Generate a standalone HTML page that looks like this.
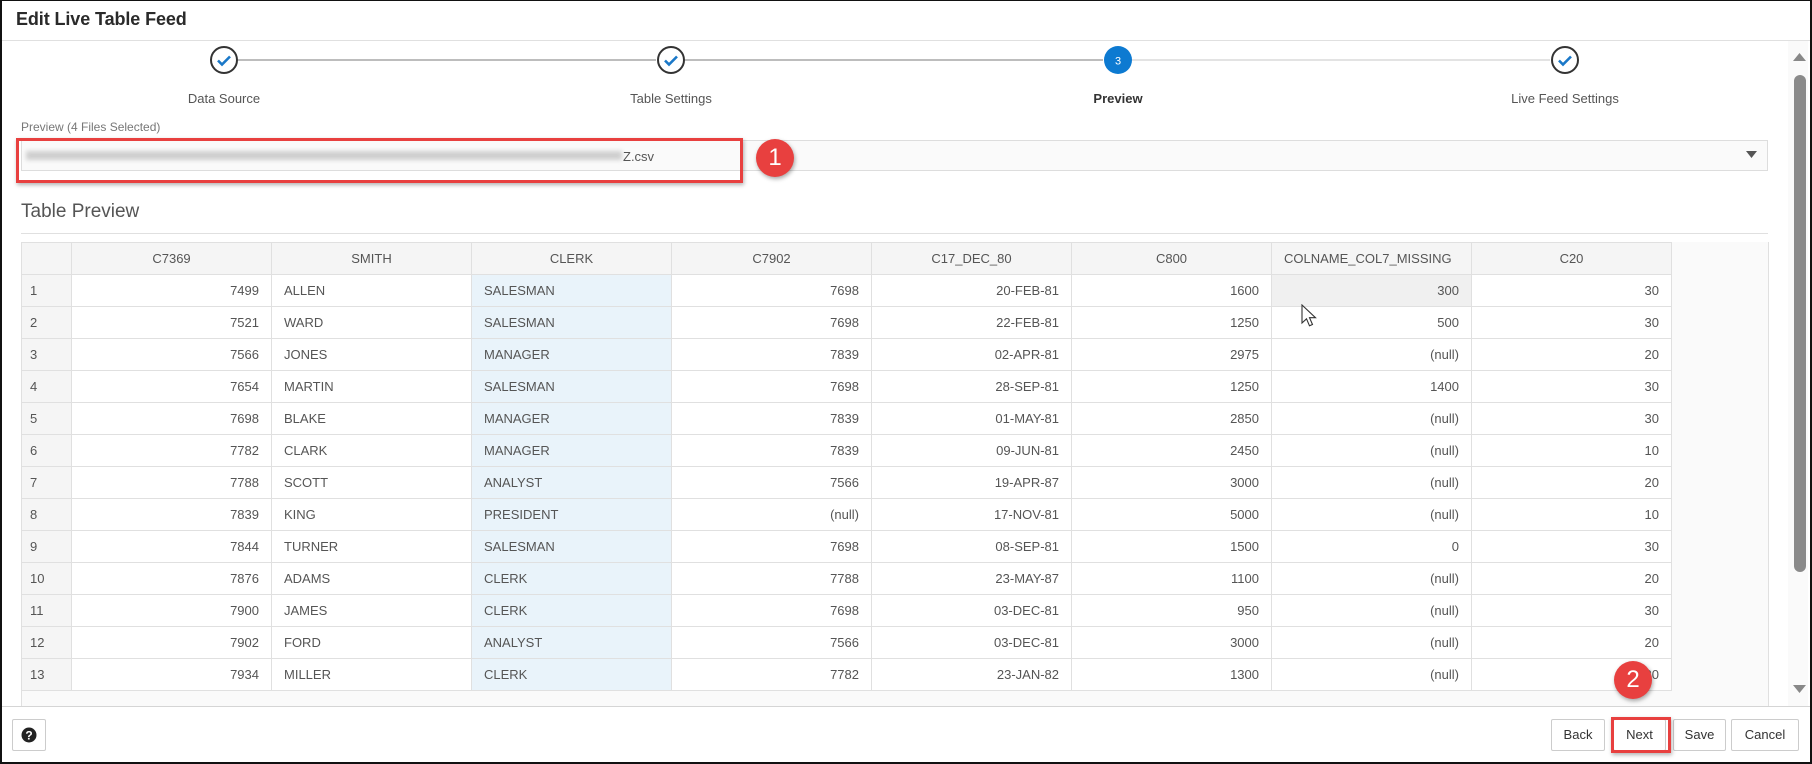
<!DOCTYPE html>
<html><head><meta charset="utf-8">
<style>
*{box-sizing:border-box;margin:0;padding:0}
body{width:1812px;height:764px;overflow:hidden;background:#fff;font-family:"Liberation Sans",sans-serif;color:#333;position:relative}
.frame{position:absolute;left:0;top:0;width:1812px;height:764px;border:2px solid #111;border-top:1px solid #111}
.abs{position:absolute}
.title{left:16px;top:9px;font-size:18px;font-weight:bold;color:#2a2a2a;letter-spacing:-0.1px}
.hline{height:1px;background:#e0e0e0}
.lbl{font-size:13px;color:#555;width:200px;text-align:center;top:91px}
table{border-collapse:collapse;position:absolute;left:21px;top:242px;font-size:13px;color:#555}
td,th{border:1px solid #e0e0e0;height:32px;padding:0 12px;font-weight:normal;white-space:nowrap}
th{background:#f5f5f5;text-align:center;width:200px}
th.rn{width:50px}
td{text-align:right;width:200px;background:#fff}
td.rn{background:#f5f5f5;text-align:left;padding-left:8px;width:50px}
td.l{text-align:left}
td.b{background:#e9f3fa}
td.g{background:#f0f0f0}
.btn{position:absolute;top:719px;height:32px;border:1px solid #ccc;border-radius:2px;background:#fff;font-size:13px;color:#333;text-align:center;line-height:30px}
.badge{position:absolute;width:38px;height:38px;border-radius:50%;background:#e8403f;color:#fff;font-size:24px;text-align:center;line-height:38px;box-shadow:1px 2px 4px rgba(0,0,0,.35)}
</style></head><body>
<div class="frame"></div>
<div class="abs title">Edit Live Table Feed</div>
<div class="abs hline" style="left:2px;top:40px;width:1808px"></div>

<div class="abs" style="left:238px;top:59px;width:418px;height:2px;background:#bdbdbd"></div>
<div class="abs" style="left:685px;top:59px;width:418px;height:2px;background:#bdbdbd"></div>
<div class="abs" style="left:1132px;top:59px;width:418px;height:2px;background:#e3e3e3"></div>
<svg class="abs" style="left:209px;top:45px" width="30" height="30"><circle cx="15" cy="15" r="13" fill="#fff" stroke="#333" stroke-width="2"/><path d="M9 15.5l4 4 8-8" fill="none" stroke="#1a78c8" stroke-width="2.6"/></svg>
<svg class="abs" style="left:656px;top:45px" width="30" height="30"><circle cx="15" cy="15" r="13" fill="#fff" stroke="#333" stroke-width="2"/><path d="M9 15.5l4 4 8-8" fill="none" stroke="#1a78c8" stroke-width="2.6"/></svg>
<svg class="abs" style="left:1103px;top:45px" width="30" height="30"><circle cx="15" cy="15" r="14" fill="#0d7ad1"/><text x="15" y="19.5" font-size="11" font-family="Liberation Sans" fill="#fff" text-anchor="middle">3</text></svg>
<svg class="abs" style="left:1550px;top:45px" width="30" height="30"><circle cx="15" cy="15" r="13" fill="#fff" stroke="#333" stroke-width="2"/><path d="M9 15.5l4 4 8-8" fill="none" stroke="#1a78c8" stroke-width="2.6"/></svg>
<div class="abs lbl" style="left:124px">Data Source</div>
<div class="abs lbl" style="left:571px">Table Settings</div>
<div class="abs lbl" style="left:1018px;font-weight:bold;color:#333">Preview</div>
<div class="abs lbl" style="left:1465px">Live Feed Settings</div>

<div class="abs" style="left:21px;top:120px;font-size:12px;color:#777">Preview (4 Files Selected)</div>
<div class="abs" style="left:21px;top:140px;width:1747px;height:31px;background:#fafafa;border:1px solid #ddd"></div>
<div class="abs" style="left:26px;top:151px;width:596px;height:9px;background:#cfcfcf;filter:blur(2px)"></div>
<div class="abs" style="left:623px;top:149px;font-size:13px;color:#555">Z.csv</div>
<svg class="abs" style="left:1746px;top:151px" width="12" height="8"><path d="M0 0h11l-5.5 7z" fill="#555"/></svg>
<div class="abs" style="left:16px;top:138px;width:727px;height:45px;border:3px solid #e8403f;box-shadow:1px 2px 4px rgba(0,0,0,.3)"></div>
<div class="badge" style="left:756px;top:139px">1</div>

<div class="abs" style="left:21px;top:201px;font-size:19px;color:#555">Table Preview</div>
<div class="abs hline" style="left:21px;top:233px;width:1747px"></div>

<div class="abs" style="left:21px;top:242px;width:1748px;height:464px;background:#fafafa;border-left:1px solid #e0e0e0;border-right:1px solid #e0e0e0"></div>
<table>
<tr><th class="rn"></th><th>C7369</th><th>SMITH</th><th>CLERK</th><th>C7902</th><th>C17_DEC_80</th><th>C800</th><th style="text-align:left">COLNAME_COL7_MISSING</th><th>C20</th></tr>
<tr><td class="rn">1</td><td>7499</td><td class="l">ALLEN</td><td class="l b">SALESMAN</td><td>7698</td><td>20-FEB-81</td><td>1600</td><td class="g">300</td><td>30</td></tr>
<tr><td class="rn">2</td><td>7521</td><td class="l">WARD</td><td class="l b">SALESMAN</td><td>7698</td><td>22-FEB-81</td><td>1250</td><td>500</td><td>30</td></tr>
<tr><td class="rn">3</td><td>7566</td><td class="l">JONES</td><td class="l b">MANAGER</td><td>7839</td><td>02-APR-81</td><td>2975</td><td>(null)</td><td>20</td></tr>
<tr><td class="rn">4</td><td>7654</td><td class="l">MARTIN</td><td class="l b">SALESMAN</td><td>7698</td><td>28-SEP-81</td><td>1250</td><td>1400</td><td>30</td></tr>
<tr><td class="rn">5</td><td>7698</td><td class="l">BLAKE</td><td class="l b">MANAGER</td><td>7839</td><td>01-MAY-81</td><td>2850</td><td>(null)</td><td>30</td></tr>
<tr><td class="rn">6</td><td>7782</td><td class="l">CLARK</td><td class="l b">MANAGER</td><td>7839</td><td>09-JUN-81</td><td>2450</td><td>(null)</td><td>10</td></tr>
<tr><td class="rn">7</td><td>7788</td><td class="l">SCOTT</td><td class="l b">ANALYST</td><td>7566</td><td>19-APR-87</td><td>3000</td><td>(null)</td><td>20</td></tr>
<tr><td class="rn">8</td><td>7839</td><td class="l">KING</td><td class="l b">PRESIDENT</td><td>(null)</td><td>17-NOV-81</td><td>5000</td><td>(null)</td><td>10</td></tr>
<tr><td class="rn">9</td><td>7844</td><td class="l">TURNER</td><td class="l b">SALESMAN</td><td>7698</td><td>08-SEP-81</td><td>1500</td><td>0</td><td>30</td></tr>
<tr><td class="rn">10</td><td>7876</td><td class="l">ADAMS</td><td class="l b">CLERK</td><td>7788</td><td>23-MAY-87</td><td>1100</td><td>(null)</td><td>20</td></tr>
<tr><td class="rn">11</td><td>7900</td><td class="l">JAMES</td><td class="l b">CLERK</td><td>7698</td><td>03-DEC-81</td><td>950</td><td>(null)</td><td>30</td></tr>
<tr><td class="rn">12</td><td>7902</td><td class="l">FORD</td><td class="l b">ANALYST</td><td>7566</td><td>03-DEC-81</td><td>3000</td><td>(null)</td><td>20</td></tr>
<tr><td class="rn">13</td><td>7934</td><td class="l">MILLER</td><td class="l b">CLERK</td><td>7782</td><td>23-JAN-82</td><td>1300</td><td>(null)</td><td>20</td></tr>
</table>

<svg class="abs" style="left:1301px;top:304px" width="18" height="24"><path d="M1 1v18l4.5-4.2 3 7 3-1.3-3-6.8h6z" fill="#fff" stroke="#333" stroke-width="1.1"/></svg>

<div class="abs" style="left:1788px;top:41px;width:20px;height:665px;background:#fafafa"></div>
<svg class="abs" style="left:1793px;top:52px" width="14" height="10"><path d="M0 9h13l-6.5-8z" fill="#888"/></svg>
<div class="abs" style="left:1794px;top:75px;width:12px;height:497px;background:#8a8a8a;border-radius:6px"></div>
<svg class="abs" style="left:1793px;top:684px" width="14" height="10"><path d="M0 1h13l-6.5 8z" fill="#888"/></svg>

<div class="abs hline" style="left:2px;top:706px;width:1808px;background:#d5d5d5"></div>
<div class="btn" style="left:12px;width:34px"><svg width="16" height="16" style="margin-top:7px"><circle cx="8" cy="8" r="7.5" fill="#222"/><text x="8" y="12.5" font-size="12" font-weight="bold" font-family="Liberation Sans" fill="#fff" text-anchor="middle">?</text></svg></div>
<div class="btn" style="left:1551px;width:54px">Back</div>
<div class="btn" style="left:1613px;width:53px">Next</div>
<div class="btn" style="left:1673px;width:53px">Save</div>
<div class="btn" style="left:1731px;width:68px">Cancel</div>
<div class="abs" style="left:1611px;top:717px;width:60px;height:36px;border:3px solid #e8403f;box-shadow:1px 2px 4px rgba(0,0,0,.3)"></div>
<div class="badge" style="left:1614px;top:661px">2</div>
</body></html>
